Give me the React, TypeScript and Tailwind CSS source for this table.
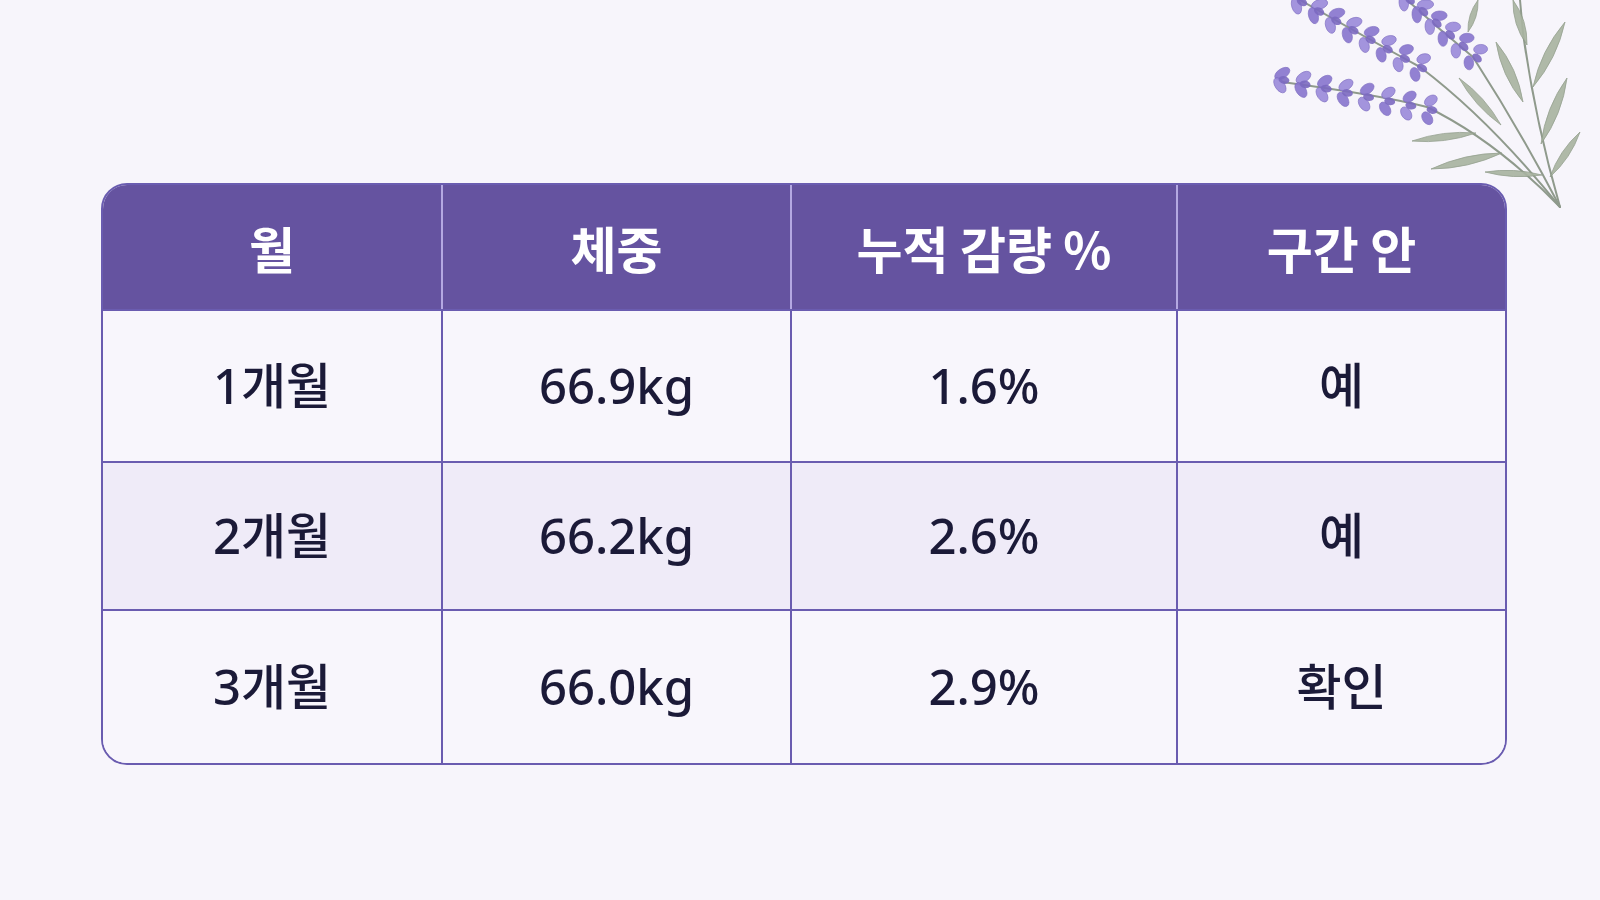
import React from 'react';

type Pt = [number, number];

const rows = [
  { month: '1개월', weight: '66.9kg', loss: '1.6%', ok: '예', bg: 'bg-[#f8f6fc]' },
  { month: '2개월', weight: '66.2kg', loss: '2.6%', ok: '예', bg: 'bg-[#efebf8]' },
  { month: '3개월', weight: '66.0kg', loss: '2.9%', ok: '확인', bg: 'bg-[#f8f6fc]' },
];

const heads = ['월', '체중', '누적 감량 %', '구간 안'];

const leaf = (a: Pt, b: Pt, w: number) => {
  const mx = (a[0] + b[0]) / 2;
  const my = (a[1] + b[1]) / 2;
  const dx = b[0] - a[0];
  const dy = b[1] - a[1];
  const len = Math.hypot(dx, dy) || 1;
  const nx = (-dy / len) * w;
  const ny = (dx / len) * w;
  return `M${a[0]} ${a[1]} Q${mx + nx} ${my + ny} ${b[0]} ${b[1]} Q${mx - nx} ${my - ny} ${a[0]} ${a[1]}Z`;
};

const Spike = ({ tip, base, count }: { tip: Pt; base: Pt; count: number }) => {
  const dx = base[0] - tip[0];
  const dy = base[1] - tip[1];
  const len = Math.hypot(dx, dy);
  const ux = dx / len;
  const uy = dy / len;
  const ang = (Math.atan2(dy, dx) * 180) / Math.PI;
  const buds: React.ReactNode[] = [];
  for (let i = 0; i < count; i++) {
    const t = i / (count - 1);
    const cx = tip[0] + dx * t;
    const cy = tip[1] + dy * t;
    const off = 6 + t * 3;
    [-1, 1].forEach((s) => {
      const bx = cx - uy * off * s - ux * 3;
      const by = cy + ux * off * s - uy * 3;
      buds.push(
        <ellipse
          key={`${i}-${s}`}
          cx={bx}
          cy={by}
          rx={8.5 - t * 1.5}
          ry={4.8}
          transform={`rotate(${ang + 45 * s} ${bx} ${by})`}
          fill={(i + (s > 0 ? 1 : 0)) % 2 === 0 ? '#8a78cf' : '#9c8cdb'}
          stroke="#7664bd"
          strokeWidth="0.6"
          opacity={0.92}
        />
      );
    });
    buds.push(<ellipse key={`c${i}`} cx={cx} cy={cy} rx={5.5} ry={3.8} transform={`rotate(${ang} ${cx} ${cy})`} fill="#7b69c0" opacity={0.9} />);
  }
  return <g>{buds}</g>;
};

const Lavender = () => (
  <svg className="absolute top-0 right-0" width="340" height="230" viewBox="1260 0 340 230">
    <g stroke="#8f9a8c" strokeWidth="2" fill="none" strokeLinecap="round">
      <path d="M1282 82 Q1380 95 1427 107 Q1495 140 1560 207" />
      <path d="M1300 0 Q1370 40 1420 67 Q1490 120 1560 207" />
      <path d="M1407 0 Q1440 30 1473 57 Q1520 130 1560 207" />
      <path d="M1560 207 Q1535 120 1523 33 L1520 0" />
    </g>
    <g fill="#a9b4a1" stroke="#8e9a88" strokeWidth="0.8" opacity="0.92">
      <path d={leaf([1527, 45], [1513, 0], 8)} />
      <path d={leaf([1533, 87], [1565, 22], 9)} />
      <path d={leaf([1523, 102], [1496, 42], 9)} />
      <path d={leaf([1541, 144], [1567, 78], 9)} />
      <path d={leaf([1501, 125], [1459, 78], 7)} />
      <path d={leaf([1550, 177], [1580, 132], 7)} />
      <path d={leaf([1476, 133], [1412, 141], 7)} />
      <path d={leaf([1502, 153], [1431, 169], 8)} />
      <path d={leaf([1542, 175], [1485, 172], 6)} />
      <path d={leaf([1468, 32], [1478, 0], 6)} />
    </g>
    <Spike tip={[1284, 80]} base={[1432, 110]} count={8} />
    <Spike tip={[1302, 2]} base={[1422, 68]} count={8} />
    <Spike tip={[1410, 0]} base={[1477, 58]} count={6} />
  </svg>
);

export default function App() {
  return (
    <div className="relative w-[1600px] h-[900px] overflow-hidden bg-[#f7f5fb] font-['Noto_Sans','Noto_Sans_CJK_KR',sans-serif]">
      <Lavender />
      <div className="pl-[101px] pt-[183px]">
        <div className="w-[1406px] rounded-[26px] border-2 border-[#6a5cb0] overflow-hidden">
          <div className="grid grid-cols-[340px_349px_386px_327px] h-[126px] bg-[#6553a0] border-b-2 border-[#6a5cb0]">
            {heads.map((h, i) => (
              <div
                key={h}
                className={`flex items-center justify-center text-white text-[50px] font-bold font-['Noto_Sans_CJK_KR','Noto_Sans',sans-serif] ${i < 3 ? 'border-r-2 border-[#b4a8e2]' : ''}`}
              >
                {h}
              </div>
            ))}
          </div>
          {rows.map((r, ri) => (
            <div
              key={r.month}
              className={`grid grid-cols-[340px_349px_386px_327px] ${r.bg} ${ri === 1 ? 'h-[148px]' : 'h-[152px]'} ${ri < 2 ? 'border-b-2 border-[#6a5cb0]' : ''}`}
            >
              {[r.month, r.weight, r.loss, r.ok].map((c, ci) => (
                <div
                  key={ci}
                  className={`flex items-center justify-center text-[49px] text-[#1b1a38] font-medium ${ci < 3 ? 'border-r-2 border-[#6a5cb0]' : ''}`}
                >
                  {c}
                </div>
              ))}
            </div>
          ))}
        </div>
      </div>
    </div>
  );
}
